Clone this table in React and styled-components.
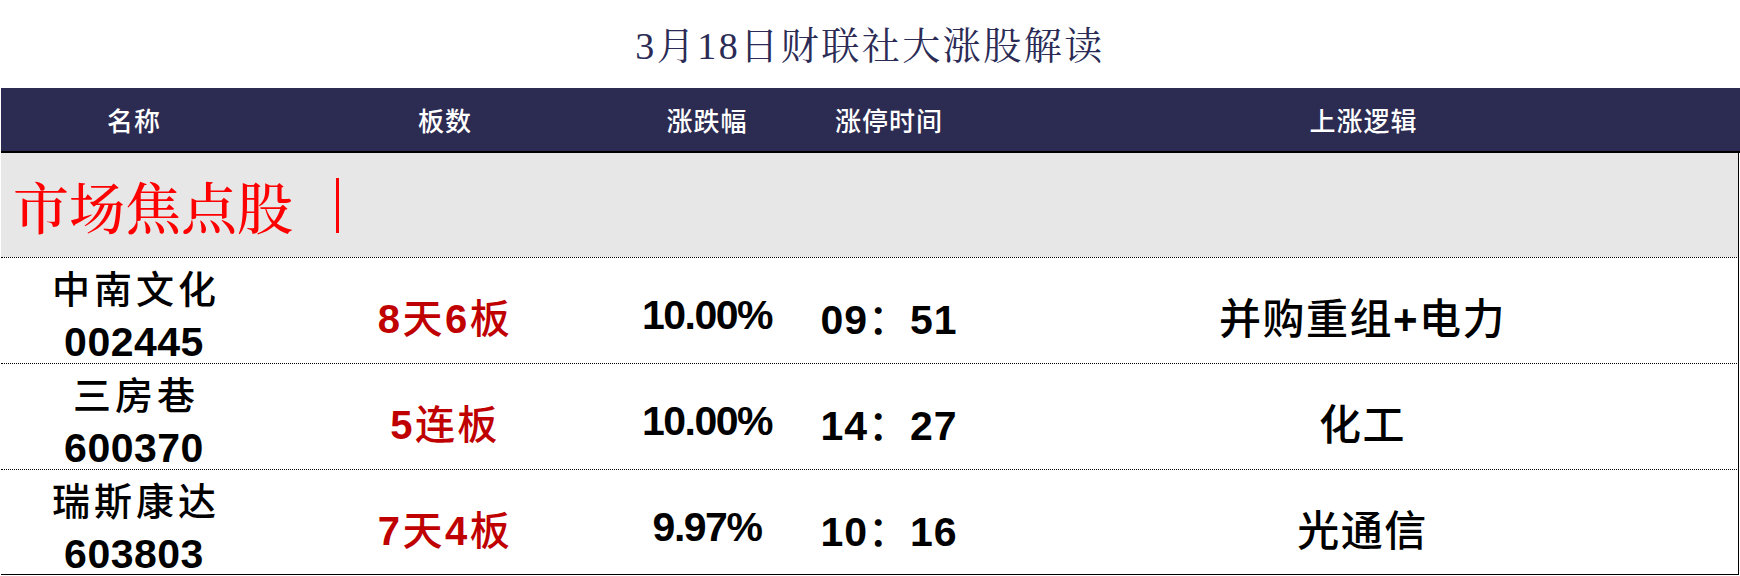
import React from "react";
import styled, { createGlobalStyle } from "styled-components";

const GlobalStyle = createGlobalStyle`
  html, body {
    margin: 0;
    padding: 0;
    background: #fff;
  }
  body {
    font-family: "Liberation Sans", "Noto Sans CJK SC", sans-serif;
  }
`;

const COLS = "266px 356px 168px 196px 1fr";

const Page = styled.div`
  width: 1740px;
  height: 576px;
  overflow: hidden;
  background: #fff;
`;

const TitleBar = styled.div`
  height: 88px;
  display: flex;
  align-items: center;
  justify-content: center;
  padding-bottom: 4px;
  box-sizing: border-box;
`;

const Title = styled.h1`
  margin: 0;
  font-family: "Liberation Serif", "Noto Serif CJK SC", "Noto Sans CJK SC", serif;
  font-weight: 400;
  font-size: 38px;
  letter-spacing: 2.5px;
  color: #2b2b55;
`;

const Table = styled.div`
  margin-left: 1px;
  width: 1738px;
`;

const HeadRow = styled.div`
  display: grid;
  grid-template-columns: ${COLS};
  height: 63px;
  align-items: center;
  background: #2c2b51;
  border-bottom: 2px solid #000;
  width: 1739px;
`;

const HeadCell = styled.div`
  text-align: center;
  color: #fff;
  font-family: "Noto Sans CJK SC", sans-serif;
  font-weight: 500;
  font-size: 26px;
  letter-spacing: 1px;
`;

const Section = styled.div`
  height: 104px;
  display: flex;
  align-items: center;
  background: #e7e7e7;
  border-right: 1px solid #000;
  padding-left: 12px;
  box-sizing: border-box;
`;

const SectionLabel = styled.span`
  font-family: "Noto Serif CJK SC", "Liberation Serif", serif;
  font-weight: 500;
  font-size: 56px;
  color: #ff0000;
  line-height: 1;
`;

const Divider = styled.span`
  display: inline-block;
  width: 3px;
  height: 55px;
  margin-left: 43px;
  background: #ff0000;
`;

const Row = styled.div`
  display: grid;
  grid-template-columns: ${COLS};
  align-items: center;
  height: 106px;
  box-sizing: border-box;
  border-top: 1px dotted #000;
  border-right: 1px solid #000;
  border-bottom: ${(p) => (p.$last ? "1px solid #000" : "none")};
  color: #000;
`;

const NameCell = styled.div`
  display: flex;
  flex-direction: column;
  align-items: center;
  padding-top: 8px;
`;

const NameLine = styled.div`
  font-family: "Noto Sans CJK SC", sans-serif;
  font-weight: 500;
  font-size: 38px;
  line-height: 42px;
  letter-spacing: 4px;
  margin-right: -4px;
`;

const CodeLine = styled.div`
  font-size: 41px;
  font-weight: 700;
  line-height: 50px;
  letter-spacing: 0.5px;
  margin-top: 9px;
`;

const Cell = styled.div`
  text-align: center;
  font-size: ${(p) => p.$size || 41}px;
  letter-spacing: ${(p) => p.$ls || 0}px;
  color: ${(p) => p.$color || "#000"};
  font-weight: 500;
  padding-top: 6px;
`;

const Num = styled.span`
  font-family: "Liberation Sans", sans-serif;
  font-weight: 700;
`;

function Mixed({ text }) {
  return text
    .split(/([0-9.%+]+)/)
    .filter(Boolean)
    .map((part, i) =>
      /^[0-9.%+]+$/.test(part) ? <Num key={i}>{part}</Num> : <span key={i}>{part}</span>
    );
}

const rows = [
  { name: "中南文化", code: "002445", board: "8天6板", pct: "10.00%", time: "09：51", logic: "并购重组+电力" },
  { name: "三房巷", code: "600370", board: "5连板", pct: "10.00%", time: "14：27", logic: "化工" },
  { name: "瑞斯康达", code: "603803", board: "7天4板", pct: "9.97%", time: "10：16", logic: "光通信" },
];

export default function App() {
  return (
    <Page>
      <GlobalStyle />
      <TitleBar>
        <Title>3月18日财联社大涨股解读</Title>
      </TitleBar>
      <Table>
        <HeadRow>
          <HeadCell>名称</HeadCell>
          <HeadCell>板数</HeadCell>
          <HeadCell>涨跌幅</HeadCell>
          <HeadCell>涨停时间</HeadCell>
          <HeadCell>上涨逻辑</HeadCell>
        </HeadRow>
        <Section>
          <SectionLabel>市场焦点股</SectionLabel>
          <Divider />
        </Section>
        {rows.map((r, i) => (
          <Row key={r.code} $last={i === rows.length - 1}>
            <NameCell>
              <NameLine>{r.name}</NameLine>
              <CodeLine>{r.code}</CodeLine>
            </NameCell>
            <Cell $size={40} $ls={2.5} $color="#c00000"><Mixed text={r.board} /></Cell>
            <Cell $ls={-1.5}><Mixed text={r.pct} /></Cell>
            <Cell $ls={1}><Mixed text={r.time} /></Cell>
            <Cell $size={42} $ls={1.5}><Mixed text={r.logic} /></Cell>
          </Row>
        ))}
      </Table>
    </Page>
  );
}
